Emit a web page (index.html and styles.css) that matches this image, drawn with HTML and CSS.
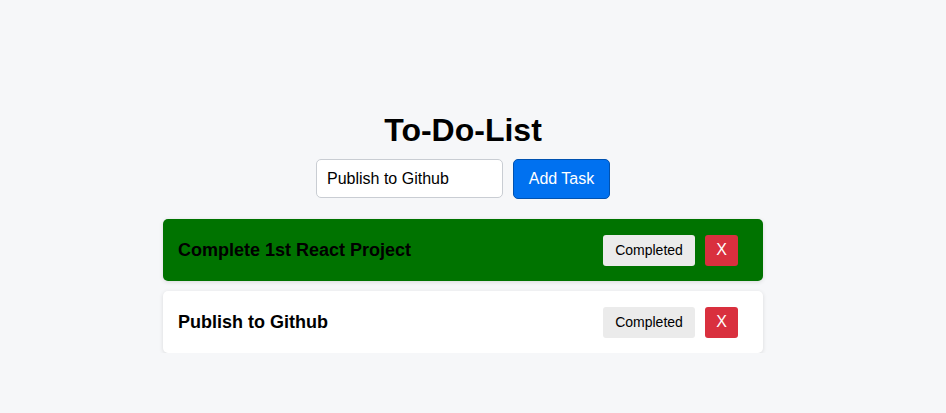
FILE: index.html
```html
<!DOCTYPE html>
<html>
<head>
<meta charset="utf-8">
<link rel="stylesheet" href="styles.css">
</head>
<body>
<div class="app">
  <h1 class="title">To-Do-List</h1>
  <div class="form">
    <input class="task-input" type="text" value="Publish to Github">
    <button class="add-btn">Add Task</button>
  </div>
  <ul class="list">
    <li class="item done">
      <span class="item-text">Complete 1st React Project</span>
      <div class="actions">
        <button class="complete-btn">Completed</button>
        <button class="delete-btn">X</button>
      </div>
    </li>
    <li class="item">
      <span class="item-text">Publish to Github</span>
      <div class="actions">
        <button class="complete-btn">Completed</button>
        <button class="delete-btn">X</button>
      </div>
    </li>
  </ul>
</div>
</body>
</html>
```
FILE: styles.css
```css
* { box-sizing: border-box; }
html, body { margin: 0; padding: 0; }
body {
  background: #f6f7f9;
  font-family: "Liberation Sans", Arial, sans-serif;
  color: #000;
  padding-right: 20px;
}
.app {
  width: 600px;
  margin: 0 auto;
  padding-top: 112px;
  display: flex;
  flex-direction: column;
  align-items: center;
}
.title {
  margin: 0 0 10px;
  font-size: 32px;
  font-weight: bold;
  line-height: 37px;
}
.form {
  display: flex;
  gap: 10px;
}
.task-input {
  width: 187px;
  height: 39px;
  padding: 0 10px;
  font-family: inherit;
  font-size: 16px;
  color: #000;
  border: 1px solid #c9cdd3;
  border-radius: 5px;
  background: #fff;
  outline: none;
}
.add-btn {
  width: 97px;
  height: 40px;
  font-family: inherit;
  font-size: 16px;
  color: #fff;
  background: #0071f0;
  border: 1px solid #0052b0;
  border-radius: 5px;
  padding: 0;
}
.list {
  list-style: none;
  margin: 20px 0 0;
  padding: 0;
  width: 600px;
  display: flex;
  flex-direction: column;
  gap: 10px;
}
.item {
  height: 62px;
  background: #fff;
  border-radius: 5px;
  box-shadow: 0 1px 4px rgba(0,0,0,0.12);
  display: flex;
  align-items: center;
  justify-content: space-between;
  padding: 0 25px 0 15px;
}
.item.done { background: #007300; }
.item-text {
  font-size: 18px;
  font-weight: bold;
}
.actions {
  display: flex;
  gap: 10px;
}
.complete-btn {
  width: 92px;
  height: 31px;
  padding: 0;
  font-family: inherit;
  font-size: 14px;
  color: #000;
  background: #ebebeb;
  border: none;
  border-radius: 3px;
}
.delete-btn {
  width: 33px;
  height: 31px;
  padding: 0;
  font-family: inherit;
  font-size: 16px;
  color: #fff;
  background: #d9303e;
  border: none;
  border-radius: 3px;
}
```
